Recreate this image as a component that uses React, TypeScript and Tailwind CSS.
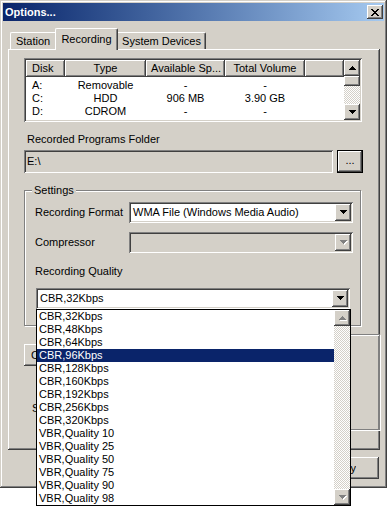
import React from "react";

const RAISED =
  "shadow-[inset_-1px_-1px_0_#404040,inset_1px_1px_0_#ffffff,inset_-2px_-2px_0_#808080,inset_2px_2px_0_#d4d0c8]";
const SUNKEN =
  "shadow-[inset_1px_1px_0_#808080,inset_-1px_-1px_0_#ffffff,inset_2px_2px_0_#404040,inset_-2px_-2px_0_#d4d0c8]";
const WINDOW =
  "shadow-[inset_-1px_-1px_0_#404040,inset_1px_1px_0_#d4d0c8,inset_-2px_-2px_0_#808080,inset_2px_2px_0_#ffffff]";
const PANEL =
  "shadow-[inset_-1px_-1px_0_#404040,inset_1px_1px_0_#ffffff,inset_-2px_-2px_0_#808080]";
const ETCHED =
  "border border-[#808080] shadow-[inset_1px_1px_0_#ffffff,1px_1px_0_#ffffff]";
const CHECKER =
  "bg-[repeating-conic-gradient(#ffffff_0_25%,#d4d0c8_0_50%)] bg-[length:2px_2px]";

function Tri({ up = false, disabled = false }: { up?: boolean; disabled?: boolean }) {
  const rects = up
    ? [
        [3, 0, 1],
        [2, 1, 3],
        [1, 2, 5],
        [0, 3, 7],
      ]
    : [
        [0, 0, 7],
        [1, 1, 5],
        [2, 2, 3],
        [3, 3, 1],
      ];
  return (
    <svg width="8" height="5" viewBox="0 0 8 5" shapeRendering="crispEdges" className="block">
      {disabled &&
        rects.map(([x, y, w], i) => (
          <rect key={"s" + i} x={x + 1} y={y + 1} width={w} height={1} fill="#ffffff" />
        ))}
      {rects.map(([x, y, w], i) => (
        <rect key={i} x={x} y={y} width={w} height={1} fill={disabled ? "#808080" : "#000000"} />
      ))}
    </svg>
  );
}

function ScrollBtn({ up = false, disabled = false }: { up?: boolean; disabled?: boolean }) {
  return (
    <div className={`w-[16px] h-[16px] shrink-0 bg-[#d4d0c8] ${RAISED} flex items-center justify-center pl-[1px]`}>
      <Tri up={up} disabled={disabled} />
    </div>
  );
}

function Combo({
  text,
  disabled = false,
  className = "",
}: {
  text: string;
  disabled?: boolean;
  className?: string;
}) {
  return (
    <div
      className={`h-[21px] ${disabled ? "bg-[#d4d0c8]" : "bg-white"} ${SUNKEN} p-[2px] flex ${className}`}
    >
      <div className="flex-1 flex items-center pl-[2px] whitespace-nowrap overflow-hidden">{text}</div>
      <div className={`w-[16px] h-[17px] bg-[#d4d0c8] ${RAISED} flex items-center justify-center pl-[1px]`}>
        <Tri disabled={disabled} />
      </div>
    </div>
  );
}

const listRows = [
  ["A:", "Removable", "-", "-"],
  ["C:", "HDD", "906 MB", "3.90 GB"],
  ["D:", "CDROM", "-", "-"],
];

const qualities = [
  "CBR,32Kbps",
  "CBR,48Kbps",
  "CBR,64Kbps",
  "CBR,96Kbps",
  "CBR,128Kbps",
  "CBR,160Kbps",
  "CBR,192Kbps",
  "CBR,256Kbps",
  "CBR,320Kbps",
  "VBR,Quality 10",
  "VBR,Quality 25",
  "VBR,Quality 50",
  "VBR,Quality 75",
  "VBR,Quality 90",
  "VBR,Quality 98",
];

export default function App() {
  return (
    <div className="relative w-[389px] h-[507px] bg-white overflow-hidden font-['Liberation_Sans',Arial,sans-serif] text-[11px] leading-none text-black">
      {/* Window */}
      <div className={`w-[387px] h-[488px] bg-[#d4d0c8] ${WINDOW} p-[3px] flex flex-col`}>
        {/* Title bar */}
        <div className="h-[18px] flex items-center justify-between bg-linear-to-r from-[#0a246a] to-[#a6caf0] pl-[2px] pr-[1px]">
          <span className="font-bold text-white text-[11px]">Options...</span>
          <div className={`w-[16px] h-[14px] bg-[#d4d0c8] ${RAISED} flex items-center justify-center`}>
            <svg width="8" height="7" viewBox="0 0 8 7" shapeRendering="crispEdges" className="block">
              <path d="M0 0h2v1h-2zM6 0h2v1h-2zM1 1h2v1h-2zM5 1h2v1h-2zM2 2h4v1h-4zM3 3h2v1h-2zM2 4h4v1h-4zM1 5h2v1h-2zM5 5h2v1h-2zM0 6h2v1h-2zM6 6h2v1h-2z" fill="#000" />
            </svg>
          </div>
        </div>

        {/* Body */}
        <div className="pl-[5px] pt-[7px] flex flex-col">
          {/* Tabs */}
          <div className="h-[21px] flex items-end pl-[2px]">
            <div className="w-[45px] h-[17px] border-t border-l border-white rounded-tl-[2px] flex items-center justify-center pt-[1px]">
              Station
            </div>
            <div className="relative z-10 w-[63px] h-[22px] -mb-[1px] bg-[#d4d0c8] border-t border-l border-white border-r border-r-[#404040] rounded-t-[2px] shadow-[inset_-1px_0_0_#808080] flex items-start justify-center pt-[5px]">
              Recording
            </div>
            <div className="w-[88px] h-[17px] border-t border-white border-r border-r-[#404040] rounded-tr-[2px] shadow-[inset_-1px_0_0_#808080] flex items-center justify-center pt-[1px]">
              System Devices
            </div>
          </div>

          {/* Tab panel */}
          <div className={`w-[372px] h-[401px] bg-[#d4d0c8] ${PANEL} pl-[16px] pt-[9px] flex flex-col`}>
            {/* List view */}
            <div className={`w-[338px] h-[64px] bg-white ${SUNKEN} p-[2px] flex`}>
              <div className="flex-1 flex flex-col overflow-hidden">
                <div className="h-[17px] flex shrink-0">
                  <div className={`w-[39px] h-full ${RAISED} bg-[#d4d0c8] flex items-center pl-[6px]`}>Disk</div>
                  <div className={`w-[81px] h-full ${RAISED} bg-[#d4d0c8] flex items-center justify-center`}>Type</div>
                  <div className={`w-[79px] h-full ${RAISED} bg-[#d4d0c8] flex items-center pl-[5px] whitespace-nowrap overflow-hidden`}>
                    Available Sp...
                  </div>
                  <div className={`w-[80px] h-full ${RAISED} bg-[#d4d0c8] flex items-center justify-center whitespace-nowrap`}>
                    Total Volume
                  </div>
                  <div className={`flex-1 h-full ${RAISED} bg-[#d4d0c8]`} />
                </div>
                <div className="pt-[2px] flex flex-col">
                  {listRows.map((r) => (
                    <div key={r[0]} className="h-[13px] flex items-center">
                      <div className="w-[39px] pl-[6px]">{r[0]}</div>
                      <div className="w-[81px] text-center">{r[1]}</div>
                      <div className="w-[79px] text-center">{r[2]}</div>
                      <div className="w-[80px] text-center">{r[3]}</div>
                    </div>
                  ))}
                </div>
              </div>
              <div className="w-[16px] flex flex-col">
                <ScrollBtn up />
                <div className={`h-[10px] bg-[#d4d0c8] ${RAISED}`} />
                <div className={`flex-1 ${CHECKER}`} />
                <ScrollBtn />
              </div>
            </div>

            {/* Folder */}
            <div className="mt-[11px] h-[13px] flex items-center pl-[3px]">Recorded Programs Folder</div>
            <div className="mt-[4px] h-[23px] flex gap-[4px]">
              <div className={`w-[309px] h-full bg-[#d4d0c8] ${SUNKEN} flex items-center pl-[3px]`}>E:\</div>
              <div className="w-[26px] h-full border border-black">
                <div className={`w-full h-full ${RAISED} flex items-center justify-center pb-[2px]`}>...</div>
              </div>
            </div>

            {/* Settings group */}
            <div className={`relative mt-[17px] w-[337px] h-[136px] ${ETCHED} flex flex-col`}>
              <div className="absolute left-[7px] -top-[7px] px-[2px] bg-[#d4d0c8] h-[13px] flex items-center">Settings</div>
              <div className="mt-[11px] flex items-center">
                <div className="w-[104px] pl-[10px]">Recording Format</div>
                <Combo text="WMA File (Windows Media Audio)" className="w-[224px]" />
              </div>
              <div className="mt-[9px] flex items-center">
                <div className="w-[104px] pl-[10px]">Compressor</div>
                <Combo text="" disabled className="w-[224px]" />
              </div>
              <div className="mt-[12px] h-[12px] flex items-center pl-[10px]">Recording Quality</div>
              <div className="mt-[11px] pl-[11px]">
                <Combo text="CBR,32Kbps" className="w-[314px]" />
              </div>
            </div>

            {/* Content mostly hidden behind the open drop list */}
            <div className="mt-[8px] flex">
              <div className="w-[96px] flex flex-col">
                <div className={`mt-[10px] w-[75px] h-[22px] ${RAISED} flex items-center pl-[7px]`}>
                  <span className="block w-[5px] overflow-hidden whitespace-nowrap">C</span>
                </div>
                <div className="mt-[37px] pl-[8px]">
                  <span className="block w-[4px] overflow-hidden whitespace-nowrap">S</span>
                </div>
              </div>
              <div className={`flex-1 h-[96px] ${ETCHED}`} />
            </div>
          </div>

          {/* Dialog buttons */}
          <div className="mt-[7px] w-[372px] flex justify-end gap-[6px] pr-[1px]">
            <div className={`w-[75px] h-[22px] ${RAISED}`} />
            <div className={`w-[75px] h-[22px] ${RAISED}`} />
            <div className={`w-[75px] h-[22px] ${RAISED} flex items-center justify-end pr-[23px]`}>
              <span className="block w-[5px] overflow-hidden whitespace-nowrap text-right [direction:rtl]">y</span>
            </div>
          </div>
        </div>
      </div>

      {/* Drop-down list (open popup) */}
      <div className="absolute left-[36px] top-[309px] w-[315px] h-[197px] border border-black bg-white flex">
        <div className="flex-1 flex flex-col">
          {qualities.map((q, i) => (
            <div
              key={q}
              className={`h-[13px] shrink-0 flex items-center pl-[2px] whitespace-nowrap ${
                i === 3 ? "bg-[#0a246a] text-white" : ""
              }`}
            >
              {q}
            </div>
          ))}
        </div>
        <div className="w-[16px] flex flex-col">
          <ScrollBtn up disabled />
          <div className={`flex-1 ${CHECKER}`} />
          <ScrollBtn disabled />
        </div>
      </div>
    </div>
  );
}
